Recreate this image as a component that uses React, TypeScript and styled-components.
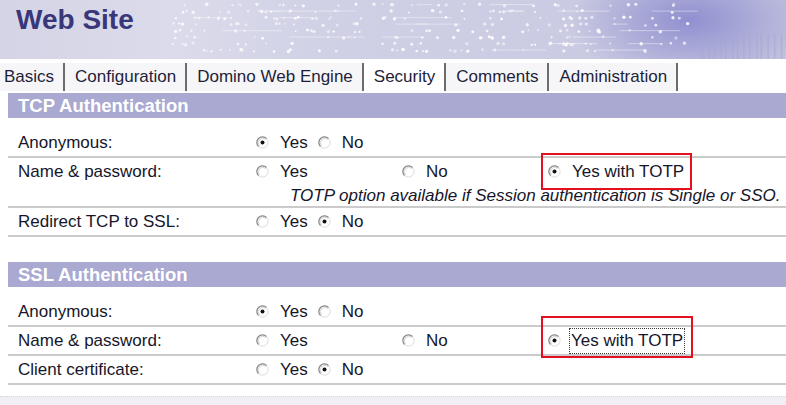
import React from 'react';
import styled, { createGlobalStyle } from 'styled-components';

const Global = createGlobalStyle`
  html, body { margin: 0; padding: 0; background: #fff; }
  body {
    font-family: "Liberation Sans", Arial, sans-serif;
    width: 786px;
    height: 405px;
    overflow: hidden;
  }
`;

const Page = styled.div`
  width: 786px;
  height: 405px;
  overflow: hidden;
  display: flex;
  flex-direction: column;
  background: #fff;
  color: #16162a;
  font-family: "Liberation Sans", Arial, sans-serif;
`;

const Header = styled.header`
  position: relative;
  flex: none;
  height: 59px;
  overflow: hidden;
  background:
    radial-gradient(ellipse 120px 62px at 690px 20px, rgba(138, 138, 206, 0.9), rgba(138, 138, 206, 0) 100%),
    linear-gradient(90deg, #d4d4e6 0%, #dbdbeb 22%, #cfcfe5 45%, #cbcbe3 70%, #c2c2df 100%);
`;

const HeaderArt = styled.svg`
  position: absolute;
  left: 0;
  top: 0;
`;

const Title = styled.h1`
  position: relative;
  margin: 0;
  padding: 4px 0 0 16px;
  font-size: 28px;
  line-height: 32px;
  font-weight: bold;
  color: #37377a;
`;

const TabBar = styled.nav`
  flex: none;
  display: flex;
  height: 28px;
  padding: 4px 0 2px;
`;

const Tab = styled.div<{ $active?: boolean; $first?: boolean }>`
  display: flex;
  align-items: center;
  padding: 0 9px 0 ${(p) => (p.$first ? 4 : 10)}px;
  border-right: 2px solid #6c6c6c;
  background: ${(p) => (p.$active ? '#ffffff' : '#f6f6f9')};
  font-size: 17px;
  color: #1e1e38;
`;

const Section = styled.section<{ $gap?: number }>`
  margin-left: 8px;
  margin-top: ${(p) => p.$gap ?? 0}px;
`;

const SectionBar = styled.div`
  height: 25px;
  line-height: 25px;
  padding-left: 10px;
  background: #a9a9d1;
  color: #fff;
  font-size: 18.5px;
  font-weight: bold;
`;

const SectionBody = styled.div`
  padding-top: 11px;
`;

const Row = styled.div`
  display: flex;
  flex-direction: column;
  border-bottom: 2px solid #cbcbcb;
`;

const RowLine = styled.div`
  display: flex;
  align-items: stretch;
  height: 27px;
`;

const Label = styled.div`
  flex: none;
  box-sizing: border-box;
  width: 248px;
  padding-left: 10px;
  display: flex;
  align-items: center;
  font-size: 17px;
`;

const Choices = styled.div`
  display: flex;
  align-items: stretch;
`;

const Choice = styled.div<{ $width?: number }>`
  position: relative;
  display: flex;
  align-items: center;
  gap: 11px;
  ${(p) => (p.$width ? `width: ${p.$width}px;` : 'margin-right: 10px;')}
  font-size: 17px;
`;

const Highlight = styled.span<{ $top: number; $bottom: number }>`
  position: absolute;
  left: -7px;
  right: -8px;
  top: ${(p) => p.$top}px;
  bottom: ${(p) => p.$bottom}px;
  border: 2px solid #e2111d;
  pointer-events: none;
`;

const ChoiceText = styled.span<{ $focused?: boolean }>`
  ${(p) =>
    p.$focused
      ? `border: 1px dotted #3a3a3a; padding: 2px 1px; margin-left: -3px;`
      : ''}
`;

const Note = styled.div`
  height: 21px;
  line-height: 21px;
  padding-left: 282px;
  font-size: 17px;
  font-style: italic;
  white-space: nowrap;
`;

const FooterBand = styled.div`
  flex: 1;
  margin-top: 11px;
  background: #f1eef6;
  border-top: 1px dotted #d9d2e3;
`;

const RadioSvg = styled.svg`
  flex: none;
  display: block;
`;

const Radio = ({ checked }: { checked?: boolean }) => (
  <RadioSvg viewBox="0 0 13 13" width={13} height={13}>
    <circle cx="6.5" cy="6.5" r="5.6" fill="#fff" stroke="#dadada" strokeWidth="1" />
    <path d="M2.5 10.5 A5.6 5.6 0 0 1 10.5 2.5" fill="none" stroke="#8a8a8a" strokeWidth="1.2" />
    <path d="M3.4 9.6 A4.4 4.4 0 0 1 9.6 3.4" fill="none" stroke="#c4c4c4" strokeWidth="0.8" />
    {checked && <circle cx="6.5" cy="6.5" r="2" fill="#111" />}
  </RadioSvg>
);

// deterministic pseudo-random for the circuit decoration
function makeRand(seed: number) {
  let s = seed;
  return () => {
    s = (s * 1103515245 + 12345) & 0x7fffffff;
    return s / 0x7fffffff;
  };
}

const rand = makeRand(42);
const dots: { x: number; y: number; r: number; o: number }[] = [];
for (let i = 0; i < 260; i++) {
  const x = 170 + rand() * 520;
  const row = Math.floor(rand() * 8);
  const y = 4 + row * 6.5 + rand() * 2;
  dots.push({ x, y, r: 0.9 + rand() * 0.9, o: 0.45 + rand() * 0.5 });
}
const traces: { x: number; y: number; w: number }[] = [];
for (let i = 0; i < 26; i++) {
  traces.push({
    x: 180 + rand() * 480,
    y: 4 + Math.floor(rand() * 8) * 6.5,
    w: 15 + rand() * 60,
  });
}
const stripes: number[] = [];
for (let i = 0; i < 14; i++) stripes.push(700 + i * 6 + rand() * 3);

const HeaderDecoration = () => (
  <HeaderArt width={786} height={59} viewBox="0 0 786 59">
    {traces.map((t, i) => (
      <rect key={`t${i}`} x={t.x} y={t.y} width={t.w} height={1.2} fill="#ffffff" opacity={0.35} />
    ))}
    {dots.map((d, i) => (
      <circle key={`d${i}`} cx={d.x} cy={d.y} r={d.r} fill="#ffffff" opacity={d.o} />
    ))}
    {stripes.map((x, i) => (
      <rect key={`s${i}`} x={x} y={34} width={1.5} height={25} fill="#a6a6d2" opacity={0.55} />
    ))}
  </HeaderArt>
);

const tabs = ['Basics', 'Configuration', 'Domino Web Engine', 'Security', 'Comments', 'Administration'];

type Opt = { label: string; checked?: boolean; highlight?: [number, number]; focused?: boolean };

const YesNo = ({ yes }: { yes: boolean }) => (
  <Choices>
    <Choice>
      <Radio checked={yes} />
      <ChoiceText>Yes</ChoiceText>
    </Choice>
    <Choice>
      <Radio checked={!yes} />
      <ChoiceText>No</ChoiceText>
    </Choice>
  </Choices>
);

const Columns = ({ options }: { options: Opt[] }) => (
  <Choices>
    {options.map((o, i) => (
      <Choice key={o.label} $width={i < options.length - 1 ? 146 : undefined}>
        <Radio checked={o.checked} />
        <ChoiceText $focused={o.focused}>{o.label}</ChoiceText>
        {o.highlight && <Highlight $top={o.highlight[0]} $bottom={o.highlight[1]} />}
      </Choice>
    ))}
  </Choices>
);

export default function App() {
  return (
    <Page>
      <Global />
      <Header>
        <HeaderDecoration />
        <Title>Web Site</Title>
      </Header>
      <TabBar>
        {tabs.map((t, i) => (
          <Tab key={t} $first={i === 0} $active={t === 'Security'}>
            {t}
          </Tab>
        ))}
      </TabBar>

      <Section>
        <SectionBar>TCP Authentication</SectionBar>
        <SectionBody>
          <Row>
            <RowLine>
              <Label>Anonymous:</Label>
              <YesNo yes />
            </RowLine>
          </Row>
          <Row>
            <RowLine>
              <Label>Name &amp; password:</Label>
              <Columns
                options={[
                  { label: 'Yes' },
                  { label: 'No' },
                  { label: 'Yes with TOTP', checked: true, highlight: [-5, -5] },
                ]}
              />
            </RowLine>
            <Note>TOTP option available if Session authentication is Single or SSO.</Note>
          </Row>
          <Row>
            <RowLine>
              <Label>Redirect TCP to SSL:</Label>
              <YesNo yes={false} />
            </RowLine>
          </Row>
        </SectionBody>
      </Section>

      <Section $gap={25}>
        <SectionBar>SSL Authentication</SectionBar>
        <SectionBody>
          <Row>
            <RowLine>
              <Label>Anonymous:</Label>
              <YesNo yes />
            </RowLine>
          </Row>
          <Row>
            <RowLine>
              <Label>Name &amp; password:</Label>
              <Columns
                options={[
                  { label: 'Yes' },
                  { label: 'No' },
                  { label: 'Yes with TOTP', checked: true, highlight: [-11, -4], focused: true },
                ]}
              />
            </RowLine>
          </Row>
          <Row>
            <RowLine>
              <Label>Client certificate:</Label>
              <YesNo yes={false} />
            </RowLine>
          </Row>
        </SectionBody>
      </Section>
      <FooterBand />
    </Page>
  );
}
